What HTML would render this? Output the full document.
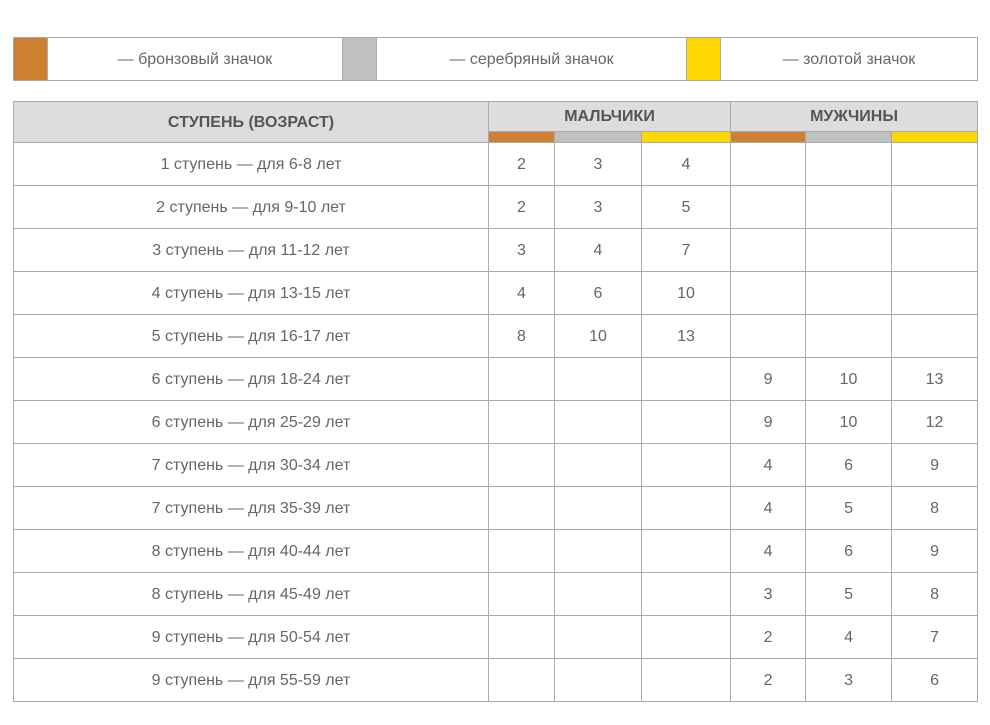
<!DOCTYPE html>
<html><head><meta charset="utf-8"><style>
body{margin:0;background:#fff;font-family:"Liberation Sans",Arial,sans-serif;color:#666;font-size:16px;}
.leg{position:absolute;left:13px;top:37px;width:963px;height:42px;border:1px solid #aaa;display:flex;}
.leg div{height:42px;line-height:43px;text-align:center;box-sizing:border-box;}
.sw{width:34px;}
table{position:absolute;left:13px;top:101px;border-collapse:collapse;table-layout:fixed;width:965px;}
td,th{border:1px solid #aaa;text-align:center;padding:0;}
th{background:#ddd;color:#555;font-weight:bold;font-size:16px;height:28px;padding-top:1px;}
td{height:40px;padding-top:2px;}
.b{background:#cd7f32;height:10px;padding:0}.s{background:#c0c0c0;height:10px;padding:0}.g{background:#ffd700;height:10px;padding:0}
</style></head><body>
<div class="leg">
<div class="sw" style="background:#cd7f32;border-right:1px solid #aaa"></div>
<div style="width:295px;border-right:1px solid #aaa">— бронзовый значок</div>
<div class="sw" style="background:#c0c0c0;border-right:1px solid #aaa"></div>
<div style="width:310px;border-right:1px solid #aaa">— серебряный значок</div>
<div class="sw" style="background:#ffd700;border-right:1px solid #aaa"></div>
<div style="flex:1">— золотой значок</div>
</div>
<table>
<colgroup><col style="width:475px"><col style="width:66px"><col style="width:87px"><col style="width:89px"><col style="width:75px"><col style="width:86px"><col style="width:86px"></colgroup>
<tr><th rowspan="2" style="height:39px">СТУПЕНЬ (ВОЗРАСТ)</th><th colspan="3">МАЛЬЧИКИ</th><th colspan="3">МУЖЧИНЫ</th></tr>
<tr><td class="b"></td><td class="s"></td><td class="g"></td><td class="b"></td><td class="s"></td><td class="g"></td></tr>
<tr><td>1 ступень — для 6-8 лет</td><td>2</td><td>3</td><td>4</td><td></td><td></td><td></td></tr>
<tr><td>2 ступень — для 9-10 лет</td><td>2</td><td>3</td><td>5</td><td></td><td></td><td></td></tr>
<tr><td>3 ступень — для 11-12 лет</td><td>3</td><td>4</td><td>7</td><td></td><td></td><td></td></tr>
<tr><td>4 ступень — для 13-15 лет</td><td>4</td><td>6</td><td>10</td><td></td><td></td><td></td></tr>
<tr><td>5 ступень — для 16-17 лет</td><td>8</td><td>10</td><td>13</td><td></td><td></td><td></td></tr>
<tr><td>6 ступень — для 18-24 лет</td><td></td><td></td><td></td><td>9</td><td>10</td><td>13</td></tr>
<tr><td>6 ступень — для 25-29 лет</td><td></td><td></td><td></td><td>9</td><td>10</td><td>12</td></tr>
<tr><td>7 ступень — для 30-34 лет</td><td></td><td></td><td></td><td>4</td><td>6</td><td>9</td></tr>
<tr><td>7 ступень — для 35-39 лет</td><td></td><td></td><td></td><td>4</td><td>5</td><td>8</td></tr>
<tr><td>8 ступень — для 40-44 лет</td><td></td><td></td><td></td><td>4</td><td>6</td><td>9</td></tr>
<tr><td>8 ступень — для 45-49 лет</td><td></td><td></td><td></td><td>3</td><td>5</td><td>8</td></tr>
<tr><td>9 ступень — для 50-54 лет</td><td></td><td></td><td></td><td>2</td><td>4</td><td>7</td></tr>
<tr><td>9 ступень — для 55-59 лет</td><td></td><td></td><td></td><td>2</td><td>3</td><td>6</td></tr>
</table>
</body></html>
